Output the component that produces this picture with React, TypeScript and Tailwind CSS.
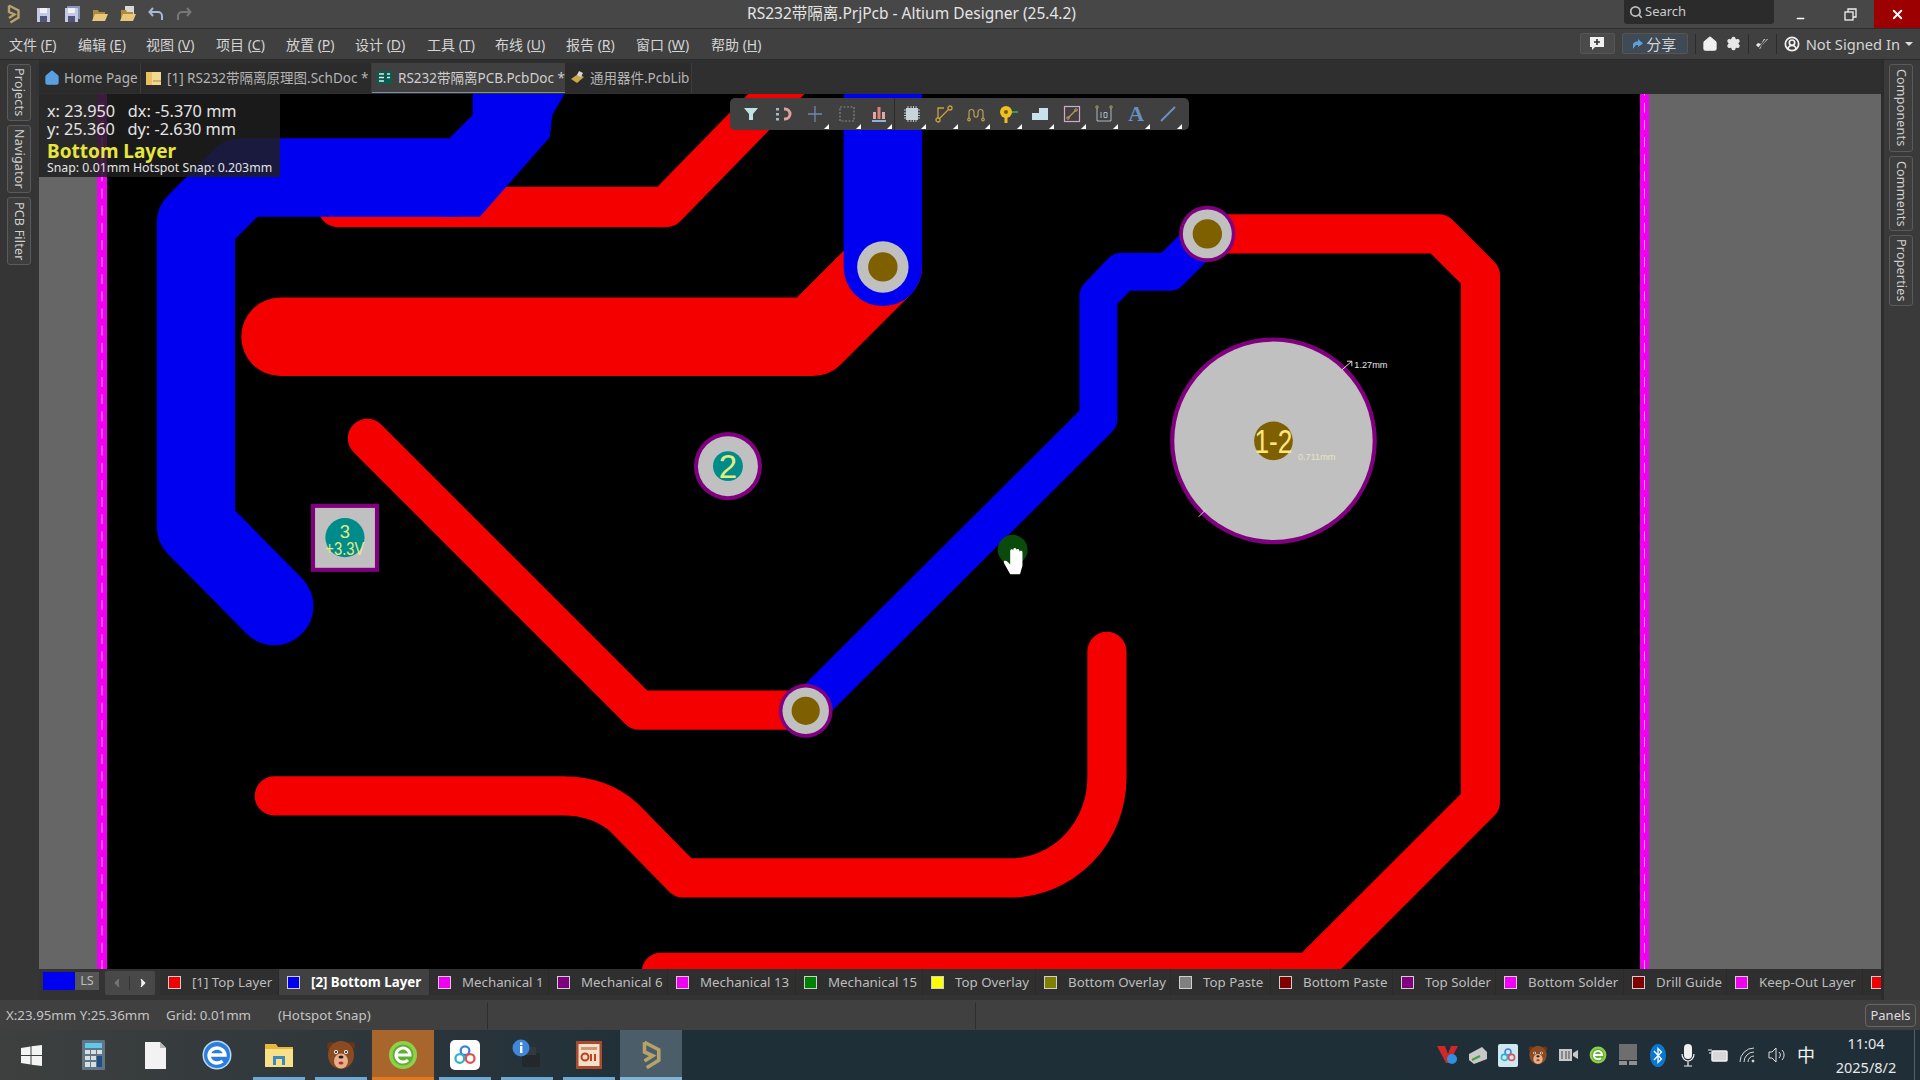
import { Home, Search, Settings, ChevronLeft, ChevronRight, Minus, X, UserCircle2 } from 'lucide-react'

const menus = [
  ['文件', 'F', 'w-[52px] mr-[17px]'],
  ['编辑', 'E', 'w-[51px] mr-[17px]'],
  ['视图', 'V', 'w-[53px] mr-[17px]'],
  ['项目', 'C', 'w-[53px] mr-[17px]'],
  ['放置', 'P', 'w-[52px] mr-[17px]'],
  ['设计', 'D', 'w-[55px] mr-[17px]'],
  ['工具', 'T', 'w-[51px] mr-[17px]'],
  ['布线', 'U', 'w-[54px] mr-[17px]'],
  ['报告', 'R', 'w-[53px] mr-[17px]'],
  ['窗口', 'W', 'w-[58px] mr-[17px]'],
  ['帮助', 'H', 'w-[55px]'],
]

const layers = [
  { name: '[1] Top Layer', w: 'w-[119px]', c: 'bg-[#f00000]' },
  { name: '[2] Bottom Layer', w: 'w-[151px]', c: 'bg-[#0000f0]', active: true },
  { name: 'Mechanical 1', w: 'w-[119px]', c: 'bg-[#f000f0]' },
  { name: 'Mechanical 6', w: 'w-[119px]', c: 'bg-[#800080]' },
  { name: 'Mechanical 13', w: 'w-[128px]', c: 'bg-[#f000f0]' },
  { name: 'Mechanical 15', w: 'w-[127px]', c: 'bg-[#008000]' },
  { name: 'Top Overlay', w: 'w-[113px]', c: 'bg-[#ffff00]' },
  { name: 'Bottom Overlay', w: 'w-[135px]', c: 'bg-[#808000]' },
  { name: 'Top Paste', w: 'w-[100px]', c: 'bg-[#808080]' },
  { name: 'Bottom Paste', w: 'w-[122px]', c: 'bg-[#800000]' },
  { name: 'Top Solder', w: 'w-[103px]', c: 'bg-[#800080]' },
  { name: 'Bottom Solder', w: 'w-[128px]', c: 'bg-[#f000f0]' },
  { name: 'Drill Guide', w: 'w-[103px]', c: 'bg-[#800000]' },
  { name: 'Keep-Out Layer', w: 'w-[136px]', c: 'bg-[#f000f0]' },
]

function Logo({ size = 20 }: { size?: number }) {
  return (
    <svg width={size * 0.75} height={size} viewBox="0 0 15 20" fill="none" stroke="#b5a36b" strokeWidth="2.4">
      <path d="M3 1.5 L12.5 6.5 V13.5 L4.5 18.5" />
      <path d="M3 1.5 V8 L8.5 10.5 L3 14" />
    </svg>
  )
}

function Floppy({ double }: { double?: boolean }) {
  return (
    <svg width="16" height="16" viewBox="0 0 16 16">
      {double && <rect x="3" y="0" width="13" height="13" fill="#8a93b8" />}
      <rect x="1" y="2" width="13" height="14" fill="#c4cae6" />
      <rect x="4" y="2" width="7" height="5" fill="#f2f2f2" />
      <rect x="4" y="10" width="7" height="6" fill="#50557a" />
    </svg>
  )
}

function OpenFolder({ paper }: { paper?: boolean }) {
  return (
    <svg width="16" height="16" viewBox="0 0 16 16">
      {paper && <rect x="5" y="0" width="9" height="9" fill="#d8d8d8" />}
      <path d="M1 4 H6 L7 6 H13 V14 H1 Z" fill="#b08a3c" />
      <path d="M3 8 H16 L13 15 H0 Z" fill="#e8c878" />
    </svg>
  )
}

// toolbar drawings, all on a 20x20 box
function ToolIcon({ kind }: { kind: string }) {
  const common = { width: 20, height: 20, viewBox: '0 0 20 20', fill: 'none' }
  switch (kind) {
    case 'filter':
      return <svg {...common}><path d="M3 4 H17 L12 10 V16 H8 V10 Z" fill="#bfe3e3" /></svg>
    case 'magnet':
      return (
        <svg {...common}>
          <path d="M11 5 H12 A5 5 0 0 1 12 15 H11" stroke="#e0a0a0" strokeWidth="3" />
          <rect x="3" y="4" width="3" height="2.5" fill="#a8b8c8" />
          <rect x="3" y="9" width="3" height="2.5" fill="#a8b8c8" />
          <rect x="3" y="14" width="3" height="2.5" fill="#a8b8c8" />
        </svg>
      )
    case 'cross':
      return <svg {...common}><path d="M10 2 V18 M3 10 H17" stroke="#6f88ad" strokeWidth="1.3" /></svg>
    case 'dashed':
      return <svg {...common}><rect x="3" y="3" width="14" height="14" stroke="#7d8790" strokeWidth="1.2" strokeDasharray="2 1.5" /></svg>
    case 'chart':
      return (
        <svg {...common}>
          <rect x="4" y="8" width="3" height="7" fill="#e0a8a0" />
          <rect x="8.5" y="3" width="3" height="12" fill="#e08078" />
          <rect x="13" y="8" width="3" height="7" fill="#e0a8a0" />
          <rect x="3" y="16" width="14" height="2" fill="#8ab4d8" />
        </svg>
      )
    case 'chip':
      return (
        <svg {...common}>
          <rect x="4" y="4" width="12" height="12" fill="#c8d4d8" />
          <path d="M6 2 V18 M9 2 V18 M11.5 2 V18 M14 2 V18 M2 6 H18 M2 9 H18 M2 11.5 H18 M2 14 H18" stroke="#c8d4d8" strokeWidth="0.9" />
        </svg>
      )
    case 'route':
      return (
        <svg {...common} stroke="#c8a040" strokeWidth="1.3">
          <circle cx="16" cy="4" r="2" />
          <circle cx="4" cy="16" r="2" />
          <path d="M5.5 14.5 L14.5 5.5 M4 14 V4 H10" />
        </svg>
      )
    case 'meander':
      return (
        <svg {...common} stroke="#b8a050" strokeWidth="1.2">
          <path d="M3 14 V8 A2.5 2.5 0 0 1 8 8 V11 A2 2 0 0 0 12 11 V8 A2.5 2.5 0 0 1 17 8 V14" />
          <circle cx="3" cy="15.5" r="1.3" />
          <circle cx="17" cy="15.5" r="1.3" />
        </svg>
      )
    case 'key':
      return (
        <svg {...common}>
          <circle cx="8" cy="8" r="6" fill="#f0c020" />
          <circle cx="8" cy="8" r="2" fill="#7a6010" />
          <rect x="6.5" y="13" width="3" height="6" fill="#f0c020" />
          <rect x="14" y="7" width="6" height="2" fill="#30a050" />
        </svg>
      )
    case 'poly':
      return <svg {...common}><path d="M2 9 H9 V4 H18 V16 H2 Z" fill="#c8e0ec" /></svg>
    case 'box':
      return (
        <svg {...common}>
          <rect x="2.5" y="2.5" width="15" height="15" stroke="#d0a8c8" strokeWidth="1.2" />
          <path d="M6 14 L14 6" stroke="#b89858" strokeWidth="1.2" />
          <circle cx="6" cy="14" r="1.3" stroke="#b89858" />
          <circle cx="14" cy="6" r="1.3" stroke="#b89858" />
        </svg>
      )
    case 'ten':
      return (
        <svg {...common} stroke="#a8b8c0" strokeWidth="1">
          <path d="M3 4 V17 H17 V4" />
          <circle cx="3" cy="3" r="1.2" stroke="#b8a050" />
          <circle cx="17" cy="3" r="1.2" stroke="#b8a050" />
          <path d="M7 8 V14 M10 8.5 h3 v5 h-3 Z" />
        </svg>
      )
    case 'a':
      return <span className="font-['Liberation_Serif',serif] font-bold text-[22px] leading-none text-[#6a90c0]">A</span>
    default:
      return <svg {...common}><path d="M3 17 L17 3" stroke="#6a90c0" strokeWidth="2" /></svg>
  }
}

function Tool({ kind, sep }: { kind: string; sep?: boolean }) {
  return (
    <div className={`relative w-[32.1px] h-[32px] flex items-center justify-center ${sep ? 'border-r border-[#2a2a2a]' : ''}`}>
      <ToolIcon kind={kind} />
      {kind !== 'filter' && kind !== 'magnet' && (
        <span className="absolute right-[2px] bottom-[1px] w-0 h-0 border-l-[5px] border-l-transparent border-b-[5px] border-b-white" />
      )}
    </div>
  )
}

function Board() {
  return (
    <svg className="block w-full h-full" viewBox="31.85 76.77 1504.3 714.6" preserveAspectRatio="none">
      <rect x="30" y="70" width="1510" height="730" fill="#666666" />
      <rect x="87" y="70" width="1253" height="730" fill="#000000" />
      <rect x="79.2" y="70" width="8.2" height="730" fill="#f000f0" />
      <rect x="1339.3" y="70" width="7.4" height="730" fill="#f000f0" />
      <path d="M83.3 70 V800 M1343 70 V800" stroke="#ffffff" strokeWidth="0.5" strokeDasharray="8 6" />

      <g fill="none" stroke="#f40000" strokeLinejoin="round" strokeLinecap="round">
        <path d="M662 48 L544 169 L276 169" strokeWidth="33" />
        <path d="M229 275 L664 275 L721 218" strokeWidth="64" />
        <path d="M300 358 L522 580 L658 580" strokeWidth="32" />
        <path d="M986 191 L1175 191 L1209 225 L1209 655 L1070 794 L540 794" strokeWidth="32" />
        <path d="M224 650 L460 650 Q490 650 510 668 L558 717 L825 717 A79 82 0 0 0 904 635 L904 532" strokeWidth="32" />
      </g>

      <g fill="none" stroke="#0000f0" strokeLinejoin="round" strokeLinecap="round">
        <path d="M372 145 L197 145 L160 182 L160 430 L224 495" strokeWidth="64" />
        <path d="M721 60 L721 218" strokeWidth="64" />
        <path d="M986 191 L955 222 L916 222 L897 242 L897 342 L658 580" strokeWidth="31" />
      </g>
      <path d="M386 70 H465 L451 94 L449 112 L392 177 L360 177 L360 120 L386 94 Z" fill="#0000f0" />

      <circle cx="721" cy="218" r="21" fill="#c0c0c0" />
      <circle cx="721" cy="218" r="12" fill="#7f6000" />
      <circle cx="986" cy="191" r="23" fill="#800080" />
      <circle cx="986" cy="191" r="20" fill="#c0c0c0" />
      <circle cx="986" cy="191" r="12" fill="#7f6000" />
      <circle cx="658" cy="580.5" r="22" fill="#800080" />
      <circle cx="658" cy="580.5" r="19" fill="#c0c0c0" />
      <circle cx="658" cy="580.5" r="11.5" fill="#7f6000" />

      <circle cx="594.5" cy="380.7" r="27.8" fill="#800080" />
      <circle cx="594.5" cy="380.7" r="24.5" fill="#c0c0c0" />
      <circle cx="594.5" cy="380.7" r="12.2" fill="#008b8b" />
      <text x="594.5" y="390.5" textAnchor="middle" fontFamily="Liberation Sans, sans-serif" fontSize="27" fill="#e4ec80">2</text>

      <rect x="254" y="411.5" width="55.5" height="55.5" fill="#800080" />
      <rect x="257.3" y="414.8" width="48.9" height="48.9" fill="#c0c0c0" />
      <circle cx="281.7" cy="439" r="16" fill="#008b8b" />
      <text x="281.7" y="439" textAnchor="middle" fontFamily="Liberation Sans, sans-serif" fontSize="15" fill="#e4ec80">3</text>
      <text x="281.7" y="453" textAnchor="middle" fontFamily="Liberation Sans, sans-serif" fontSize="15" fill="#e4ec80" textLength="32" lengthAdjust="spacingAndGlyphs">+3.3V</text>

      <circle cx="1040" cy="360" r="84.4" fill="#800080" />
      <circle cx="1040" cy="360" r="81" fill="#c0c0c0" />
      <circle cx="1040" cy="360" r="15.8" fill="#7f6000" />
      <text x="1040" y="370" textAnchor="middle" fontFamily="Liberation Sans, sans-serif" fontSize="27" fill="#ffe680" textLength="31" lengthAdjust="spacingAndGlyphs">1-2</text>
      <path d="M1096 302 L1104 295 M1100 295 H1104 V299 M979 422 L985 416" stroke="#f0d8e8" strokeWidth="0.8" fill="none" />
      <text x="1106" y="300.5" fontFamily="Liberation Sans, sans-serif" fontSize="7.5" fill="#e8e8e8">1.27mm</text>
      <text x="1060" y="376" fontFamily="Liberation Sans, sans-serif" fontSize="7.5" fill="#e8e4c0">0.711mm</text>

      <circle cx="827" cy="449" r="12.2" fill="#0a4a0a" />
      <path transform="translate(3 3)" d="M822 466 L817 457 C816 455 818 454 820 456 L822 458 V447 C822 445 824.5 445 824.5 447 V446 C824.5 444 827 444 827 446 V446.5 C827 445 829.5 445 829.5 447 V448 C829.5 446.5 832 446.5 832 448 V459 L830 466 Z" fill="#ffffff" />
    </svg>
  )
}

function Sidetab({ label, h }: { label: string; h: string }) {
  return (
    <div className={`${h} w-[24px] flex items-center justify-center rounded-[3px] border border-[#5a5a5a] bg-[#3d3d3d] text-[12.5px] tracking-[0.2px] text-[#cfcfcf] [writing-mode:vertical-rl]`}>
      {label}
    </div>
  )
}

function TaskSlot({ children, bar, bg }: { children: React.ReactNode; bar?: string; bg?: string }) {
  return (
    <div className={`relative w-[62px] h-full flex items-center justify-center ${bg ?? ''}`}>
      {children}
      {bar && <span className={`absolute bottom-0 left-[5px] right-[5px] h-[3px] ${bar}`} />}
    </div>
  )
}

function Bear({ size }: { size: number }) {
  return (
    <svg width={size} height={size} viewBox="0 0 30 30">
      <circle cx="5" cy="6" r="4" fill="#6a3418" />
      <circle cx="25" cy="6" r="4" fill="#6a3418" />
      <ellipse cx="15" cy="15" rx="13" ry="14" fill="#8c4a22" />
      <ellipse cx="15" cy="21" rx="7" ry="7.5" fill="#e8b088" />
      <circle cx="10" cy="12" r="2" fill="#fff" />
      <circle cx="20" cy="12" r="2" fill="#fff" />
      <circle cx="10" cy="12" r="1" fill="#111" />
      <circle cx="20" cy="12" r="1" fill="#111" />
      <ellipse cx="15" cy="17" rx="2.5" ry="1.6" fill="#222" />
      <ellipse cx="15" cy="23" rx="2.5" ry="1.5" fill="#b03030" />
    </svg>
  )
}

function GreenE({ size }: { size: number }) {
  return (
    <svg width={size} height={size} viewBox="0 0 30 30" fill="none">
      <circle cx="15" cy="15" r="14" fill="#8fd04a" />
      <circle cx="15" cy="15" r="10.5" fill="#5fb030" />
      <path d="M8 15 H22 A7 7 0 1 0 20 20" stroke="#fff" strokeWidth="3" />
    </svg>
  )
}

function App3Rings({ size }: { size: number }) {
  return (
    <svg width={size} height={size} viewBox="0 0 30 30" fill="none" strokeWidth="2.6">
      <circle cx="15" cy="10" r="5" stroke="#3a80e0" />
      <circle cx="9" cy="19" r="5" stroke="#30b0d0" />
      <circle cx="21" cy="19" r="5" stroke="#e05050" />
    </svg>
  )
}

export default function App() {
  return (
    <div className="w-[1920px] h-[1080px] overflow-hidden flex flex-col bg-[#2f2f2f] font-['Noto_Sans','Noto_Sans_CJK_SC',sans-serif] text-[#cfcfcf]">
      {/* title bar */}
      <div className="h-[29px] shrink-0 flex items-start bg-[#474747] border-b border-[#2e2e2e]">
        <div className="h-[28px] w-[28px] pl-[6px] flex items-center"><Logo /></div>
        <div className="h-[28px] flex items-center gap-[12px] ml-[8px]">
          <Floppy />
          <Floppy double />
          <OpenFolder />
          <OpenFolder paper />
          <svg width="16" height="14" viewBox="0 0 16 14" fill="none" stroke="#a8b8d8" strokeWidth="2"><path d="M5 1 L1.5 5 L5 9 M2 5 H10 A4 4 0 0 1 14 9 V13" /></svg>
          <svg width="16" height="14" viewBox="0 0 16 14" fill="none" stroke="#777777" strokeWidth="2"><path d="M11 1 L14.5 5 L11 9 M14 5 H6 A4 4 0 0 0 2 9 V13" /></svg>
        </div>
        <div className="h-[28px] ml-[555px] flex items-center text-[15.5px] whitespace-nowrap text-[#e4e4e4]">RS232带隔离.PrjPcb - Altium Designer (25.4.2)</div>
        <div className="ml-auto w-[150px] h-[24px] flex items-center gap-[2px] pl-[5px] rounded-b-[3px] bg-[#2b2b2b] text-[13px] text-[#cccccc]">
          <Search size={14} strokeWidth={3} className="text-[#bbbbbb]" />
          Search
        </div>
        <div className="w-[53px] h-[28px] flex items-center justify-center"><Minus size={11} strokeWidth={3} className="text-white mt-[8px]" /></div>
        <div className="w-[47px] h-[28px] flex items-center justify-center">
          <svg width="13" height="13" viewBox="0 0 13 13" fill="none" stroke="#f0f0f0" strokeWidth="1.3"><rect x="1" y="4" width="8" height="8" /><path d="M4 4 V1 H12 V9 H9" /></svg>
        </div>
        <div className="w-[46px] h-[28px] flex items-center justify-center bg-[#9c0000]"><X size={15} strokeWidth={3} className="text-white" /></div>
      </div>

      {/* menu bar */}
      <div className="h-[31px] shrink-0 flex items-center pl-[9px] bg-[#404040] border-b border-[#2a2a2a] text-[14px] text-[#d4d4d4]">
        {menus.map(([zh, key, cls]) => (
          <span key={key} className={`${cls} whitespace-nowrap`}>{zh} (<span className="underline">{key}</span>)</span>
        ))}
        <div className="ml-auto flex items-center">
          <div className="w-[35px] h-[21px] flex items-center justify-center rounded-[2px] border border-[#555555] bg-[#4a4a4a]">
            <svg width="16" height="15" viewBox="0 0 16 15"><path d="M1 1 H15 V11 H6 L3 14 V11 H1 Z" fill="#f0f0f0" /><path d="M8 3 V9 M5 6 H11" stroke="#333333" strokeWidth="1.6" /></svg>
          </div>
          <div className="w-[66px] h-[21px] ml-[7px] flex items-center justify-center gap-[3px] rounded-[2px] border border-[#555555] bg-[#3f4a54] text-[15px]">
            <svg width="10" height="10" viewBox="0 0 10 10"><path d="M5 0 L10 4.5 L5 8 V6 H3 L0 10 V5 C1 3 3 2.5 5 2.5 Z" fill="#5ea0dc" /></svg>
            分享
          </div>
          <span className="w-px h-[20px] bg-[#2c2c2c] ml-[7px]" />
          <Home size={16} fill="#f0f0f0" strokeWidth={2} className="ml-[6px] text-[#f0f0f0]" />
          <Settings size={15} fill="#e8e8e8" strokeWidth={2} className="ml-[8px] text-[#e8e8e8]" />
          <span className="w-px h-[20px] bg-[#2c2c2c] ml-[7px]" />
          <svg width="14" height="14" viewBox="0 0 14 14" className="ml-[6px]"><path d="M1 8 L5 12 L7 8 L13 2 L9 2 L6 7 L3 6 Z" fill="#e8e8e8" /><path d="M2 13 L12 1" stroke="#404040" strokeWidth="1.2" /></svg>
          <span className="w-px h-[20px] bg-[#2c2c2c] ml-[7px]" />
          <UserCircle2 size={16} strokeWidth={2.6} className="ml-[7px] text-[#f0f0f0]" />
          <span className="ml-[6px] text-[14.7px] whitespace-nowrap">Not Signed In</span>
          <span className="ml-[5px] mr-[7px] w-0 h-0 border-x-[4px] border-x-transparent border-t-[4px] border-t-[#dddddd]" />
        </div>
      </div>

      {/* workspace */}
      <div className="flex-1 min-h-0 flex">
        <div className="w-[39px] shrink-0 flex flex-col gap-[4px] pl-[7px] pt-[4px] bg-[#353535]">
          <Sidetab label="Projects" h="h-[57px]" />
          <Sidetab label="Navigator" h="h-[68px]" />
          <Sidetab label="PCB Filter" h="h-[68px]" />
        </div>

        <div className="flex-1 min-w-0 flex flex-col">
          <div className="h-[34px] shrink-0 flex items-end text-[13.5px] leading-[18px] pb-[1px] text-[#b4b4b4] bg-[#2f2f2f]">
            <div className="h-[30px] w-[102px] flex items-center gap-[4px] pl-[5px] bg-[#2b2b2b] border-r border-[#3c3c3c] whitespace-nowrap">
              <Home size={16} fill="#5aa0e0" strokeWidth={2} className="text-[#5aa0e0]" />
              Home Page
            </div>
            <div className="h-[30px] w-[231px] flex items-center gap-[6px] pl-[5px] bg-[#2b2b2b] border-r border-[#3c3c3c] whitespace-nowrap">
              <svg width="15" height="13" viewBox="0 0 15 13"><rect width="15" height="13" fill="#f0d890" /><rect x="0" y="0" width="6" height="13" fill="#e8c060" /><path d="M7 9 H15" stroke="#a88848" /></svg>
              [1] RS232带隔离原理图.SchDoc *
            </div>
            <div className="h-[30px] w-[193px] flex items-center gap-[6px] pl-[5px] bg-[#404040] border-b border-[#7a90b0] text-[#cfcfcf] whitespace-nowrap">
              <svg width="15" height="13" viewBox="0 0 15 13"><rect width="15" height="13" fill="#0c5a50" /><path d="M2 3 H7 M2 6.5 H7 M2 10 H7 M10 3 H13 M10 6.5 H13" stroke="#d8f0e8" strokeWidth="1.6" /></svg>
              RS232带隔离PCB.PcbDoc *
            </div>
            <div className="h-[30px] w-[127px] flex items-center gap-[5px] pl-[5px] bg-[#2b2b2b] border-r border-[#3c3c3c] whitespace-nowrap">
              <svg width="15" height="14" viewBox="0 0 15 14"><path d="M1 8 L8 3 L14 6 L7 12 Z" fill="#c8a848" /><path d="M9 0 L13 2 L11 6 L7 4 Z" fill="#d8d8d8" /></svg>
              通用器件.PcbLib
            </div>
          </div>

          <div className="relative flex-1 min-h-0">
            <Board />
            <div className="absolute left-0 top-0 w-[241px] h-[83px] pl-[8px] pt-[8px] bg-[#1f1f1f]/85 text-[#e4e4e4]">
              <div className="text-[16.3px] leading-[18px] whitespace-pre">x: 23.950   dx: -5.370 mm</div>
              <div className="text-[16.3px] leading-[18px] whitespace-pre">y: 25.360   dy: -2.630 mm</div>
              <div className="mt-[3px] text-[19px] leading-[20px] font-bold text-[#e6e63c] whitespace-nowrap">Bottom Layer</div>
              <div className="text-[12.3px] leading-[13px] whitespace-nowrap">Snap: 0.01mm Hotspot Snap: 0.203mm</div>
            </div>
            <div className="absolute left-[691px] top-[4px] w-[459px] h-[32px] pl-[5px] flex rounded-[5px] bg-[#404040]">
              <Tool kind="filter" />
              <Tool kind="magnet" />
              <Tool kind="cross" />
              <Tool kind="dashed" />
              <Tool kind="chart" sep />
              <Tool kind="chip" />
              <Tool kind="route" />
              <Tool kind="meander" />
              <Tool kind="key" />
              <Tool kind="poly" />
              <Tool kind="box" />
              <Tool kind="ten" />
              <Tool kind="a" />
              <Tool kind="line" />
            </div>
          </div>

          <div className="h-[31px] shrink-0 flex items-start bg-[#333333] text-[13.3px] text-[#bdbdbd]">
            <div className="w-[4px] h-[26px]" />
            <div className="w-[32px] h-[18px] mt-[3px] bg-[#0000f0]" />
            <div className="w-[24px] h-[18px] mt-[3px] flex items-center justify-center bg-[#555555] text-[12.5px]">LS</div>
            <div className="w-[50px] h-[24px] ml-[6px] mt-[2px] flex items-center bg-[#484848] rounded-[2px]">
              <span className="w-[25px] flex justify-center border-r border-[#333333]"><ChevronLeft size={14} fill="#777777" className="text-[#777777]" /></span>
              <span className="w-[25px] flex justify-center"><ChevronRight size={14} fill="#f0f0f0" className="text-[#f0f0f0]" /></span>
            </div>
            <div className="w-[5px]" />
            {layers.map(l => (
              <div key={l.name} className={`${l.w} h-[26px] pt-[1px] shrink-0 flex items-center gap-[11px] pl-[8px] whitespace-nowrap border-r border-[#2a2a2a] ${l.active ? 'bg-[#414141] font-bold text-white' : 'bg-[#2f2f2f]'}`}>
                <span className={`w-[13px] h-[13px] shrink-0 border border-[#cfcfcf] ${l.c}`} />
                {l.name}
              </div>
            ))}
            <div className="h-[26px] flex-1 min-w-0 flex items-center pl-[8px] overflow-hidden bg-[#2f2f2f]">
              <span className="w-[13px] h-[13px] shrink-0 border border-[#cfcfcf] bg-[#f00000]" />
            </div>
          </div>
        </div>

        <div className="w-[39px] shrink-0 flex flex-col gap-[4px] pl-[5px] pt-[4px] bg-[#3a3a3a] border-l-[3px] border-[#2c2c2c]">
          <Sidetab label="Components" h="h-[88px]" />
          <Sidetab label="Comments" h="h-[75px]" />
          <Sidetab label="Properties" h="h-[71px]" />
        </div>
      </div>

      {/* status bar */}
      <div className="h-[30px] shrink-0 flex items-center pt-[1px] bg-[#404040] text-[13.3px] text-[#c4c4c4]">
        <span className="ml-[6px] w-[160px] whitespace-nowrap">X:23.95mm Y:25.36mm</span>
        <span className="w-[112px] whitespace-nowrap">Grid: 0.01mm</span>
        <span className="w-[209px] whitespace-nowrap">(Hotspot Snap)</span>
        <span className="w-px h-[26px] bg-[#2e2e2e]" />
        <span className="ml-[487px] w-px h-[26px] bg-[#2e2e2e]" />
        <span className="ml-auto mr-[4px] w-[51px] h-[23px] flex items-center justify-center rounded-[4px] border border-[#666666] text-[13px] text-[#dddddd]">Panels</span>
      </div>

      {/* windows taskbar */}
      <div className="h-[50px] shrink-0 flex items-stretch bg-gradient-to-r from-[#3e403f] via-[#1f2f38] via-35% to-[#1f2e37]">
        <TaskSlot>
          <svg width="21" height="21" viewBox="0 0 21 21" fill="#f4f4f4"><path d="M0 3 L9.5 1.5 V10 H0 Z M10.5 1.3 L21 0 V10 H10.5 Z M0 11 H9.5 V19.5 L0 18 Z M10.5 11 H21 V21 L10.5 19.7 Z" /></svg>
        </TaskSlot>
        <TaskSlot>
          <svg width="23" height="30" viewBox="0 0 23 30">
            <rect width="23" height="30" rx="1" fill="#607684" />
            <rect x="3" y="3" width="17" height="5" fill="#60c8e8" />
            <path d="M3 10 H8 V14 H3 Z M9 10 H14 V14 H9 Z M15 10 H20 V14 H15 Z M3 16 H8 V20 H3 Z M9 16 H14 V20 H9 Z M3 22 H8 V27 H3 Z M9 22 H14 V27 H9 Z" fill="#d8dfe3" />
            <rect x="15" y="16" width="5" height="11" fill="#1e4d88" />
          </svg>
        </TaskSlot>
        <TaskSlot>
          <svg width="21" height="27" viewBox="0 0 21 27"><path d="M0 0 H15 L21 6 V27 H0 Z" fill="#f2f2f2" /><path d="M15 0 L21 6 H15 Z" fill="#b8b8b8" /></svg>
        </TaskSlot>
        <TaskSlot>
          <svg width="30" height="30" viewBox="0 0 30 30" fill="none">
            <circle cx="15" cy="15" r="14.5" fill="#b8dcf4" />
            <circle cx="15" cy="15" r="13" fill="#2a7ee0" />
            <path d="M7 15 H23 A8 7.5 0 1 0 20.5 21" stroke="#fff" strokeWidth="3.4" />
          </svg>
        </TaskSlot>
        <TaskSlot bar="bg-[#6aaad4]">
          <svg width="28" height="24" viewBox="0 0 28 24">
            <path d="M0 1 H11 L13 4 H28 V24 H0 Z" fill="#e8b838" />
            <rect y="6" width="28" height="18" fill="#f8e088" />
            <path d="M8 22 V13 H20 V22 H17 V16 H11 V22 Z" fill="#3c88c0" />
          </svg>
        </TaskSlot>
        <TaskSlot bar="bg-[#6aaad4]"><Bear size={30} /></TaskSlot>
        <TaskSlot bg="bg-[#a9662c]" bar="bg-[#e07820] !left-0 !right-0"><GreenE size={30} /></TaskSlot>
        <TaskSlot bar="bg-[#6aaad4]">
          <div className="w-[30px] h-[30px] rounded-[5px] bg-white flex items-center justify-center"><App3Rings size={26} /></div>
        </TaskSlot>
        <TaskSlot bar="bg-[#6aaad4]">
          <svg width="30" height="32" viewBox="0 0 30 32">
            <rect x="10" y="14" width="18" height="14" rx="2" fill="#22282c" />
            <rect x="13" y="8" width="11" height="8" fill="#303a40" />
            <circle cx="9" cy="9" r="8.5" fill="#3f88d8" />
            <rect x="8" y="7" width="2.4" height="7" fill="#fff" />
            <rect x="8" y="3.5" width="2.4" height="2.4" fill="#fff" />
          </svg>
        </TaskSlot>
        <TaskSlot bar="bg-[#6aaad4]">
          <svg width="26" height="28" viewBox="0 0 26 28">
            <rect width="26" height="28" fill="#a84a30" />
            <rect x="2.5" y="3" width="21" height="22" fill="#f4e0c8" />
            <rect x="5" y="6" width="16" height="3" fill="#c89878" />
            <circle cx="9" cy="16" r="3.5" fill="none" stroke="#c04020" strokeWidth="2" />
            <path d="M15 13 V20 M19 13 V20" stroke="#c04020" strokeWidth="2" />
          </svg>
        </TaskSlot>
        <TaskSlot bg="bg-[#4c5d6a]" bar="bg-[#7db4d8] !left-0 !right-0"><Logo size={30} /></TaskSlot>

        <div className="ml-auto flex items-center">
          <div className="w-[30px] flex justify-center">
            <svg width="22" height="20" viewBox="0 0 22 20"><path d="M0 1 H8 L11 9 L14 1 H21 L12 18 H9 Z" fill="#d02828" /><circle cx="15" cy="14" r="5" fill="#3090e0" /></svg>
          </div>
          <div className="w-[30px] flex justify-center">
            <svg width="20" height="20" viewBox="0 0 20 20"><path d="M1 9 L14 2 L19 7 V14 L6 19 L1 15 Z" fill="#c8c8c8" /><path d="M4 15 L12 11" stroke="#40a040" strokeWidth="2" /></svg>
          </div>
          <div className="w-[30px] flex justify-center">
            <div className="w-[20px] h-[23px] rounded-[2px] bg-[#cfe8f0] flex items-center justify-center"><App3Rings size={18} /></div>
          </div>
          <div className="w-[30px] flex justify-center"><Bear size={20} /></div>
          <div className="w-[30px] flex justify-center">
            <svg width="19" height="14" viewBox="0 0 19 14" fill="#c8c8c8"><rect y="1" width="13" height="12" /><path d="M14 5 L19 2 V11 L14 8 Z" /><path d="M3 3 V11 M7 3 V11 M10 3 V11" stroke="#40484c" /></svg>
          </div>
          <div className="w-[30px] flex justify-center"><GreenE size={18} /></div>
          <div className="w-[30px] flex justify-center">
            <svg width="18" height="22" viewBox="0 0 18 22"><rect width="18" height="16" fill="#6e6e6e" /><rect y="17" width="8" height="4" fill="#909090" /><rect x="10" y="17" width="8" height="4" fill="#909090" /></svg>
          </div>
          <div className="w-[30px] flex justify-center">
            <svg width="16" height="23" viewBox="0 0 16 23"><ellipse cx="8" cy="11.5" rx="8" ry="11.5" fill="#0a78d0" /><path d="M4 7 L11.5 15 L8 18.5 V4.5 L11.5 8 L4 16" stroke="#fff" strokeWidth="1.3" fill="none" /></svg>
          </div>
          <div className="w-[30px] flex justify-center">
            <svg width="14" height="23" viewBox="0 0 14 23" fill="none"><rect x="3" width="8" height="15" rx="4" fill="#f0f0f0" /><path d="M1 10 A6 7 0 0 0 13 10 M7 17 V22 M3 22 H11" stroke="#f0f0f0" strokeWidth="1.2" /></svg>
          </div>
          <div className="w-[30px] flex justify-center">
            <svg width="20" height="13" viewBox="0 0 20 13" fill="none"><rect x="4" y="2" width="15" height="10" rx="1" stroke="#f0f0f0" strokeWidth="1.5" fill="#d8d8d8" /><path d="M0 1 H4 M1 4 H3" stroke="#f0f0f0" /></svg>
          </div>
          <div className="w-[30px] flex justify-center">
            <svg width="18" height="16" viewBox="0 0 18 16" fill="none" stroke="#d8d8d8" strokeWidth="1"><path d="M1 15 A14 14 0 0 1 15 1 M5 15 A10 10 0 0 1 15 5 M9 15 A6 6 0 0 1 15 9" /><circle cx="14" cy="14" r="1" fill="#f0f0f0" /></svg>
          </div>
          <div className="w-[28px] flex justify-center">
            <svg width="18" height="16" viewBox="0 0 18 16" fill="none" stroke="#e0e0e0" strokeWidth="1"><path d="M1 5 H4 L8 1 V15 L4 11 H1 Z M11 5 A4 4 0 0 1 11 11 M14 3 A7 7 0 0 1 14 13" /></svg>
          </div>
          <div className="w-[30px] flex justify-center text-[18px] text-[#f2f2f2]">中</div>
          <div className="w-[90px] mr-[3px] text-center text-[14.5px] leading-[24px] text-[#e8e8e8] whitespace-nowrap">
            <div>11:04</div>
            <div>2025/8/2</div>
          </div>
          <span className="w-px h-full bg-[#55606a] mr-[5px]" />
        </div>
      </div>
    </div>
  )
}
